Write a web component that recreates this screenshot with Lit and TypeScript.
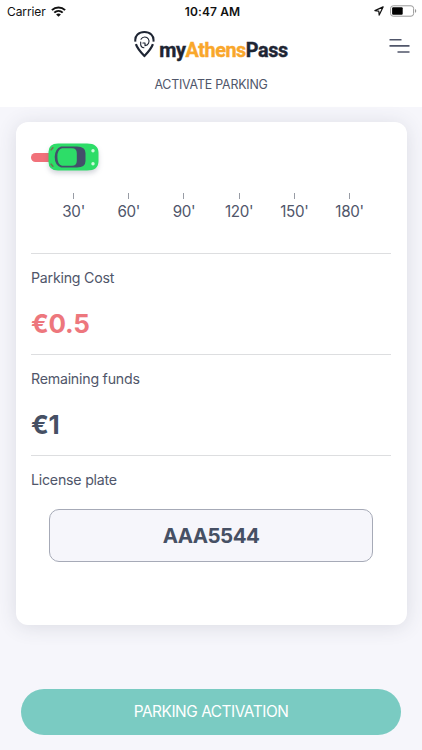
import { LitElement, html, css } from "lit";
import { customElement, property } from "lit/decorators.js";

@customElement("status-bar")
class StatusBar extends LitElement {
  static styles = css`
    :host { display: grid; grid-template-columns: 1fr auto 1fr; align-items: center; height: 22px; padding: 0 5px 0 7px; color: #111; }
    .left { display: flex; align-items: center; gap: 5px; font-size: 12px; letter-spacing: -0.1px; }
    .time { font-size: 12px; font-weight: 600; letter-spacing: 0.1px; padding-left: 1px; }
    .right { display: flex; align-items: center; justify-content: flex-end; gap: 6px; }
    svg { display: block; }
  `;
  render() {
    return html`
      <div class="left">
        <span>Carrier</span>
        <svg width="15" height="11" viewBox="0 0 15 11" fill="none" stroke="#111" stroke-width="2">
          <path d="M0.9 4.1C4.6.5 10.4.5 14.1 4.1" />
          <path d="M3.3 6.6c2.4-2.3 6-2.3 8.4 0" />
          <path d="M5.1 8.4c1.4-1.3 3.4-1.3 4.8 0L7.5 10.8z" fill="#111" stroke="none" />
        </svg>
      </div>
      <div class="time">10:47 AM</div>
      <div class="right">
        <svg width="10" height="10" viewBox="0 0 10 10" fill="none" stroke="#111" stroke-width="1.2" stroke-linejoin="round">
          <path d="M9.1.9.9 4.6l3.9.6.4 3.9z" />
        </svg>
        <svg width="27" height="12" viewBox="0 0 27 12">
          <rect x="0.6" y="0.8" width="23" height="10.4" rx="2.6" fill="#fff" stroke="#999" />
          <rect x="2.1" y="2.3" width="10.6" height="7.4" rx="1" fill="#000" />
          <path d="M25 4.1c1.7.5 1.7 3.3 0 3.8z" fill="#999" />
        </svg>
      </div>
    `;
  }
}

@customElement("brand-header")
class BrandHeader extends LitElement {
  static styles = css`
    :host { display: block; height: 85px; }
    .bar { display: grid; grid-template-columns: 1fr auto 1fr; align-items: start; padding: 8px 12px 0; height: 48px; box-sizing: border-box; }
    .logo { grid-column: 2; display: flex; gap: 4px; }
    .name { color: #1e2533; font-family: Roboto, sans-serif; font-size: 19.8px; font-weight: 700; line-height: 24px; padding-top: 9px; letter-spacing: -0.42px; -webkit-text-stroke: 0.4px currentColor; white-space: nowrap; }
    .accent { color: #f9a72b; }
    .menu { justify-self: end; padding-top: 8px; }
    .title { text-align: center; font-size: 12.4px; line-height: 16px; color: #50566a; padding-top: 7px; letter-spacing: -0.2px; }
    svg { display: block; }
  `;
  render() {
    return html`
      <div class="bar">
        <div class="logo">
          <svg width="21" height="28" viewBox="0 0 21 28" fill="none" stroke="#1e2533">
            <path d="M1.4 11.6C.4 5.6 5 1.9 10.4 1.9S20.4 5.6 19.4 11.6" stroke-width="2" />
            <path d="M1.9 14.2c1.4 4.1 5 8.3 8.5 11.9 3.5-3.6 7.1-7.8 8.5-11.9" stroke-width="2.2" stroke-linejoin="round" />
            <path d="M7 9.2A4.3 4.3 0 1 1 11 15.6V13H8.9M6.7 12v2.800q.3 2.800 3.200 3" stroke-width="1.1" stroke-linecap="round" stroke-linejoin="round" />
          </svg>
          <div class="name">my<span class="accent">Athens</span>Pass</div>
        </div>
        <svg class="menu" width="22" height="16" viewBox="0 0 22 16" stroke="#50566a" stroke-width="1.6">
          <path d="M1.5 1.8h12M1.5 7.9h20M9.5 14h12" />
        </svg>
      </div>
      <div class="title">ACTIVATE PARKING</div>
    `;
  }
}

@customElement("time-slider")
class TimeSlider extends LitElement {
  static styles = css`
    :host { display: block; height: 109.5px; }
    .track { display: flex; align-items: center; height: 28px; }
    .trail { width: 20px; height: 9px; border-radius: 5px 0 0 5px; background: #f1717a; margin-right: -3px; }
    svg { display: block; filter: drop-shadow(0 3px 2.5px rgba(40, 50, 80, 0.2)); }
    .scale { display: grid; grid-template-columns: repeat(6, 55.2px); margin: 21.5px 0 0 15px; }
    .mark { display: flex; flex-direction: column; align-items: center; gap: 3px; font-size: 15.2px; line-height: 20px; letter-spacing: -0.3px; }
    .tick { width: 1px; height: 6px; background: #989ca5; }
  `;
  render() {
    return html`
      <div class="track">
        <div class="trail"></div>
        <svg width="51" height="28" viewBox="0 0 51 28">
          <path d="M10 .5H39Q50.5.5 50.5 10v8q0 9.5-11.5 9.5H10Q.5 27.5.5 19V9Q.5.5 10 .5z" fill="#2ddd68" />
          <path d="M2.7 7.4l2.6-3.2M2.7 20.6l2.6 3.2" stroke="#747454" stroke-width="1.5" />
          <path d="M13 3.5H29Q37.5 3.5 37.5 10v8q0 6.5-8.5 6.5H13Q6.7 22 6.7 14T13 3.5z" fill="#43506a" />
          <path d="M14 5.3h10q4.8 0 4.8 5v7.4q0 5-4.8 5H14q-4.6-1-4.6-8.7t4.6-8.7z" fill="#2ddd68" />
          <circle cx="45" cy="7.8" r="1.7" fill="#c9fbd9" />
          <circle cx="45" cy="20.7" r="1.7" fill="#c9fbd9" />
        </svg>
      </div>
      <div class="scale">
        ${[30, 60, 90, 120, 150, 180].map(
          (m) => html`<div class="mark"><span class="tick"></span><span>${m}'</span></div>`
        )}
      </div>
    `;
  }
}

@customElement("amount-row")
class AmountRow extends LitElement {
  @property() label = "";
  @property() amount = "";
  static styles = css`
    :host { display: block; height: 101.2px; box-sizing: border-box; border-top: 1px solid #dddee0; padding-top: 14px; color: #465064; }
    .label { font-size: 14.2px; line-height: 20px; color: #50566a; letter-spacing: -0.23px; }
    .amount { font-size: 26px; line-height: 32px; font-weight: 700; margin-top: 20px; letter-spacing: -0.3px; }
    :host([highlight]) .amount { color: #ed777d; }
  `;
  render() {
    return html`
      <div class="label">${this.label}</div>
      <div class="amount">${this.amount}</div>
    `;
  }
}

@customElement("app-root")
class AppRoot extends LitElement {
  static styles = css`
    :host { display: flex; flex-direction: column; height: 750px; box-sizing: border-box; overflow: hidden; background: #f6f6fb; color: #50566a; font-family: Inter, "Liberation Sans", sans-serif; }
    .top { background: #fff; }
    .card { margin: 15px 15.5px 0; height: 502.5px; box-sizing: border-box; padding: 21px 15.5px 0; border-radius: 12px; background: #fff; box-shadow: 0 2px 20px rgba(60, 65, 85, 0.14); }
    .plate { border-top: 1px solid #dddee0; padding-top: 14px; }
    .label { font-size: 14.2px; line-height: 20px; letter-spacing: -0.23px; }
    .field { margin: 19px 18px 0; height: 53px; box-sizing: border-box; border: 1px solid #a6aab7; border-radius: 10px; background: #f6f6fb; display: flex; align-items: center; justify-content: center; font-size: 20.5px; font-weight: 700; letter-spacing: -0.55px; color: #465064; }
    .action { margin: 64px 21px 0; height: 46px; border: 0; border-radius: 23px; background: #7acbc2; color: #fff; font-family: inherit; font-size: 15.4px; letter-spacing: -0.45px; padding: 0; }
  `;
  render() {
    return html`
      <div class="top">
        <status-bar></status-bar>
        <brand-header></brand-header>
      </div>
      <main class="card">
        <time-slider></time-slider>
        <amount-row highlight label="Parking Cost" amount="€0.5"></amount-row>
        <amount-row label="Remaining funds" amount="€1"></amount-row>
        <div class="plate">
          <div class="label">License plate</div>
          <div class="field">AAA5544</div>
        </div>
      </main>
      <button class="action">PARKING ACTIVATION</button>
    `;
  }
}
